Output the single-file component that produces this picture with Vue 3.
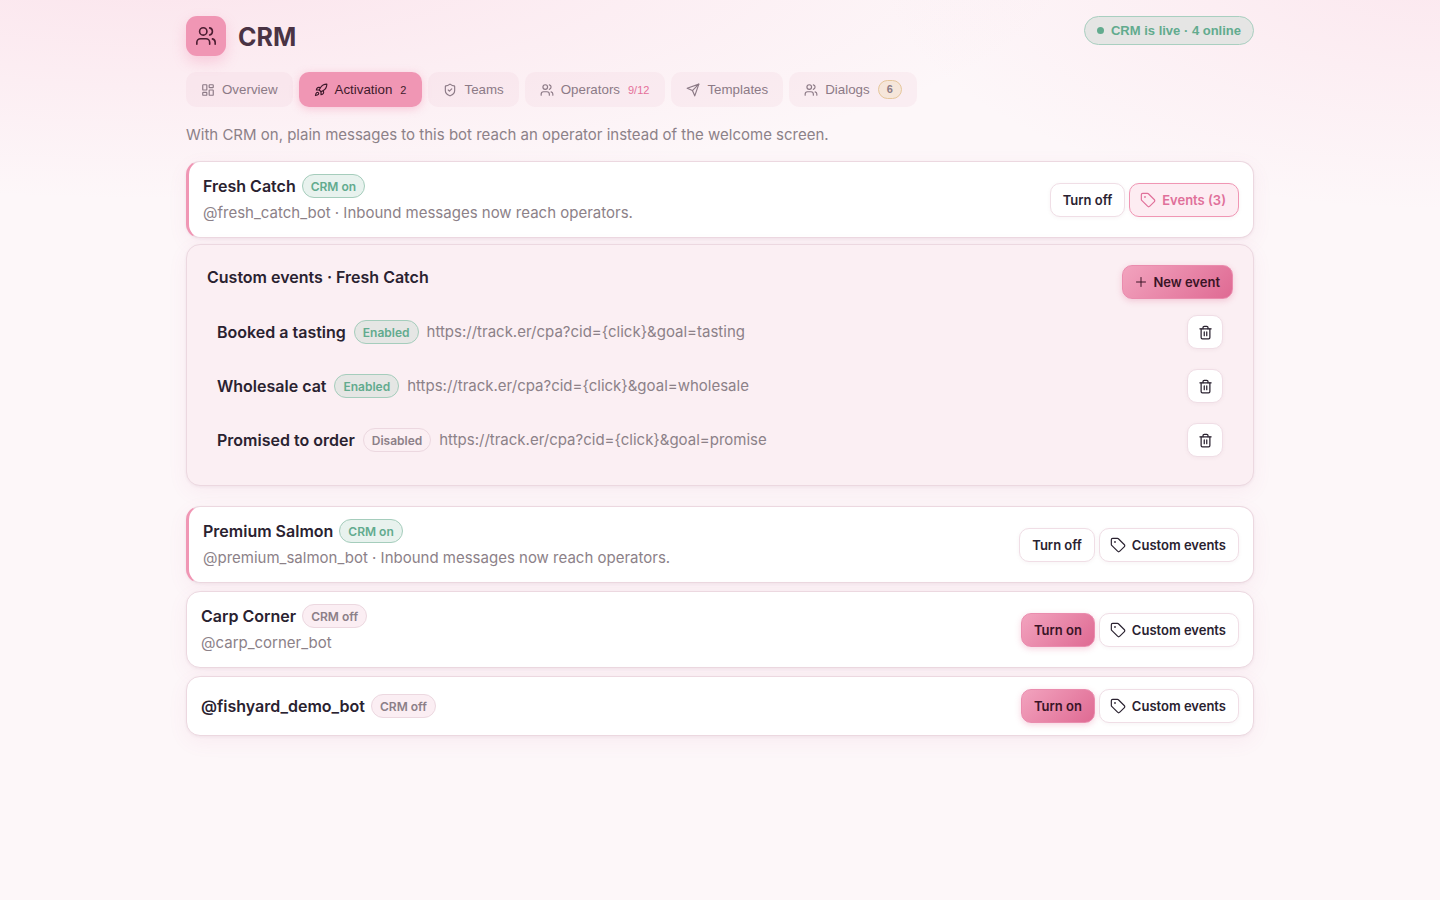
<script setup>
	import { ref } from "vue";

	// Icon shapes, all on a 24x24 grid
	const icons = {
		users: [
			"M16 21v-2a4 4 0 0 0-4-4H6a4 4 0 0 0-4 4v2",
			"M13 7a4 4 0 1 1-8 0 4 4 0 0 1 8 0z",
			"M22 21v-2a4 4 0 0 0-3-3.87",
			"M16 3.13a4 4 0 0 1 0 7.75",
		],
		dashboard: [
			"M4 3h5a1 1 0 0 1 1 1v7a1 1 0 0 1-1 1H4a1 1 0 0 1-1-1V4a1 1 0 0 1 1-1z",
			"M15 3h5a1 1 0 0 1 1 1v3a1 1 0 0 1-1 1h-5a1 1 0 0 1-1-1V4a1 1 0 0 1 1-1z",
			"M15 12h5a1 1 0 0 1 1 1v7a1 1 0 0 1-1 1h-5a1 1 0 0 1-1-1v-7a1 1 0 0 1 1-1z",
			"M4 16h5a1 1 0 0 1 1 1v3a1 1 0 0 1-1 1H4a1 1 0 0 1-1-1v-3a1 1 0 0 1 1-1z",
		],
		rocket: [
			"M4.5 16.5c-1.5 1.26-2 5-2 5s3.74-.5 5-2c.71-.84.7-2.13-.09-2.91a2.18 2.18 0 0 0-2.91-.09z",
			"m12 15-3-3a22 22 0 0 1 2-3.95A12.88 12.88 0 0 1 22 2c0 2.72-.78 7.5-6 11a22.35 22.35 0 0 1-4 2z",
			"M9 12H4s.55-3.03 2-4c1.62-1.08 5 0 5 0",
			"M12 15v5s3.03-.55 4-2c1.08-1.62 0-5 0-5",
		],
		shield: [
			"M20 13c0 5-3.5 7.5-7.66 8.95a1 1 0 0 1-.67-.01C7.5 20.5 4 18 4 13V6a1 1 0 0 1 1-1c2 0 4.5-1.2 6.24-2.72a1.17 1.17 0 0 1 1.52 0C14.51 3.81 17 5 19 5a1 1 0 0 1 1 1z",
			"m9 12 2 2 4-4",
		],
		send: ["m22 2-7 20-4-9-9-4Z", "M22 2 11 13"],
		tag: [
			"M12.586 2.586A2 2 0 0 0 11.172 2H4a2 2 0 0 0-2 2v7.172a2 2 0 0 0 .586 1.414l8.704 8.704a2.426 2.426 0 0 0 3.42 0l6.58-6.58a2.426 2.426 0 0 0 0-3.42z",
			"M8 7.5a.5.5 0 1 1-1 0 .5.5 0 0 1 1 0z",
		],
		trash: [
			"M3 6h18",
			"M19 6v14c0 1-1 2-2 2H7c-1 0-2-1-2-2V6",
			"M8 6V4c0-1 1-2 2-2h4c1 0 2 1 2 2v2",
			"M10 11v6",
			"M14 11v6",
		],
	};

	const activeTab = ref("Activation");

	const tabs = [
		{ label: "Overview", icon: "dashboard" },
		{ label: "Activation", icon: "rocket", count: "2" },
		{ label: "Teams", icon: "shield" },
		{ label: "Operators", icon: "users", count: "9/12" },
		{ label: "Templates", icon: "send" },
		{ label: "Dialogs", icon: "users", unread: "6" },
	];

	const bots = ref([
		{
			name: "Fresh Catch",
			handle: "@fresh_catch_bot",
			on: true,
			open: true,
			events: [
				{ name: "Booked a tasting", goal: "tasting", enabled: true },
				{ name: "Wholesale cat", goal: "wholesale", enabled: true },
				{ name: "Promised to order", goal: "promise", enabled: false },
			],
		},
		{ name: "Premium Salmon", handle: "@premium_salmon_bot", on: true, events: [] },
		{ name: "Carp Corner", handle: "@carp_corner_bot", on: false, events: [] },
		{ name: "@fishyard_demo_bot", on: false, events: [] },
	]);

	const removeEvent = (bot, event) => {
		bot.events = bot.events.filter((e) => e !== event);
	};
</script>

<template>
	<main class="crm">
		<header class="crm-header">
			<div class="crm-title">
				<span class="crm-logo">
					<svg class="icon" viewBox="0 0 24 24">
						<path v-for="d in icons.users" :key="d" :d="d" />
					</svg>
				</span>
				<h1>CRM</h1>
			</div>
			<span class="live-pill"><i class="dot"></i>CRM is live · 4 online</span>
		</header>

		<nav class="tabs">
			<button
				v-for="tab in tabs"
				:key="tab.label"
				type="button"
				class="tab"
				:class="{ active: tab.label === activeTab }"
				@click="activeTab = tab.label"
			>
				<svg class="icon" viewBox="0 0 24 24">
					<path v-for="d in icons[tab.icon]" :key="d" :d="d" />
				</svg>
				<span>{{ tab.label }}</span>
				<span v-if="tab.count" class="tab-count">{{ tab.count }}</span>
				<span v-if="tab.unread" class="tab-unread">{{ tab.unread }}</span>
			</button>
		</nav>

		<p class="intro muted">
			With CRM on, plain messages to this bot reach an operator instead of the
			welcome screen.
		</p>

		<div class="bots">
			<section v-for="bot in bots" :key="bot.name">
				<div class="bot-card" :class="{ on: bot.on }">
					<div class="bot-info">
						<div class="bot-name">
							<strong>{{ bot.name }}</strong>
							<span class="badge" :class="bot.on ? 'success' : 'off'">
								{{ bot.on ? "CRM on" : "CRM off" }}
							</span>
						</div>
						<div v-if="bot.handle" class="muted">
							{{ bot.handle
							}}<template v-if="bot.on">
								· Inbound messages now reach operators.</template
							>
						</div>
					</div>
					<div class="bot-actions">
						<button
							type="button"
							class="btn"
							:class="{ primary: !bot.on }"
							@click="bot.on = !bot.on"
						>
							{{ bot.on ? "Turn off" : "Turn on" }}
						</button>
						<button
							type="button"
							class="btn with-icon"
							:class="{ selected: bot.open }"
							@click="bot.open = !bot.open"
						>
							<svg class="icon tag" viewBox="0 0 24 24">
								<path v-for="d in icons.tag" :key="d" :d="d" />
							</svg>
							{{ bot.open ? `Events (${bot.events.length})` : "Custom events" }}
						</button>
					</div>
				</div>

				<!-- Custom events -->
				<div v-if="bot.open" class="events">
					<div class="events-header">
						<h2>Custom events · {{ bot.name }}</h2>
						<button type="button" class="btn primary">
							<svg class="icon plus" viewBox="0 0 24 24">
								<path d="M3 12h18M12 3v18" />
							</svg>
							New event
						</button>
					</div>
					<ul>
						<li v-for="event in bot.events" :key="event.name">
							<strong>{{ event.name }}</strong>
							<span class="badge" :class="{ success: event.enabled }">
								{{ event.enabled ? "Enabled" : "Disabled" }}
							</span>
							<span class="muted event-url"
								>https://track.er/cpa?cid={click}&amp;goal={{ event.goal }}</span
							>
							<button
								type="button"
								class="btn delete"
								aria-label="Delete event"
								@click="removeEvent(bot, event)"
							>
								<svg class="icon" viewBox="0 0 24 24">
									<path v-for="d in icons.trash" :key="d" :d="d" />
								</svg>
							</button>
						</li>
					</ul>
				</div>
			</section>
		</div>
	</main>
</template>

<style>
	body {
		margin: 0;
		min-height: 100vh;
		background: radial-gradient(
				ellipse 900px 240px at 12% -40px,
				rgba(244, 160, 190, 0.22),
				transparent
			),
			radial-gradient(
				ellipse 560px 240px at 100% -30px,
				rgba(244, 160, 190, 0.18),
				transparent
			),
			#fdf7f9;
	}
</style>

<style scoped>
	.crm {
		box-sizing: border-box;
		max-width: 1100px;
		margin: 0 auto;
		padding: 16px;
		font-family: Inter, "Liberation Sans", sans-serif;
		font-size: 16px;
		line-height: 24px;
		color: #2a2230;
	}

	.icon {
		width: 14px;
		height: 14px;
		flex-shrink: 0;
		fill: none;
		stroke: currentColor;
		stroke-width: 2;
		stroke-linecap: round;
		stroke-linejoin: round;
	}

	button {
		cursor: pointer;
	}

	/* Header */

	.crm-header {
		display: flex;
		justify-content: space-between;
		align-items: flex-start;
		margin-bottom: 16px;
	}

	.crm-title {
		display: flex;
		align-items: center;
		gap: 12px;
	}

	.crm-logo {
		display: flex;
		align-items: center;
		justify-content: center;
		width: 40px;
		height: 40px;
		border-radius: 11px;
		background: #f096b4;
		color: #4a1c30;
		box-shadow: 0 6px 14px rgba(240, 120, 160, 0.28);
	}

	.crm-logo .icon {
		width: 22px;
		height: 22px;
		stroke-width: 1.75;
	}

	h1 {
		margin: 0;
		padding-top: 2px;
		font-size: 25px;
		line-height: 32px;
		font-weight: 700;
		color: #4a3344;
	}

	.live-pill {
		display: flex;
		align-items: center;
		gap: 7px;
		padding: 6px 12px;
		border: 1px solid #a9cfc0;
		border-radius: 999px;
		background: #e5e5e4;
		font-family: "Liberation Sans", Arial, sans-serif;
		font-size: 13px;
		line-height: 15px;
		font-weight: 700;
		color: #62ab8e;
	}

	.dot {
		width: 7px;
		height: 7px;
		border-radius: 50%;
		background: currentColor;
	}

	/* Tabs */

	.tabs {
		display: flex;
		flex-wrap: wrap;
		gap: 6px;
		margin-bottom: 16px;
	}

	.tab {
		display: flex;
		align-items: center;
		gap: 7px;
		height: 35px;
		padding: 0 15px;
		border: 0;
		border-radius: 10px;
		background: rgba(240, 205, 218, 0.22);
		font-family: "Liberation Sans", Arial, sans-serif;
		color: #8c7a86;
	}

	.tab.active {
		background: #f096b4;
		color: #3f1a2c;
		box-shadow: 0 2px 8px rgba(240, 120, 160, 0.35);
	}

	.tab-count {
		padding: 0 1px;
		font-size: 11px;
		color: #e5709a;
	}

	.active .tab-count {
		color: inherit;
	}

	.tab-unread {
		margin-left: 1px;
		padding: 0 8px;
		border: 1px solid #e6c79c;
		border-radius: 999px;
		background: #f6e6da;
		font-size: 11px;
		line-height: 17px;
		font-weight: 700;
	}

	.muted {
		font-size: 15px;
		color: #8c8188;
	}

	.intro {
		margin: 0 0 14px;
	}

	/* Bots */

	.bots {
		display: flex;
		flex-direction: column;
		gap: 8px;
	}

	.bot-card {
		display: flex;
		align-items: center;
		justify-content: space-between;
		gap: 12px;
		padding: 12px 14px;
		border: 1px solid #ecd8e0;
		border-radius: 14px;
		background: #fff;
		box-shadow: 0 1px 3px rgba(90, 30, 60, 0.06),
			0 6px 20px rgba(200, 90, 140, 0.07);
	}

	.bot-card.on {
		border-left: 3px solid #f096b4;
	}

	.bot-info {
		display: flex;
		flex-direction: column;
		gap: 3px;
	}

	.bot-name {
		display: flex;
		align-items: center;
		gap: 6px;
	}

	strong,
	h2 {
		font-weight: 600;
	}

	.badge {
		padding: 1px 8px 0;
		border: 1px solid #ecd8e0;
		border-radius: 999px;
		font-size: 12px;
		line-height: 21px;
		font-weight: 600;
		color: #8c7f88;
	}

	.badge.off {
		background: #fbeef3;
	}

	.badge.success {
		border-color: #a5cdbc;
		background: #e8f2ee;
		color: #62ab8e;
	}

	.bot-actions {
		display: flex;
		gap: 4px;
	}

	.btn {
		display: flex;
		align-items: center;
		justify-content: center;
		gap: 6px;
		box-sizing: border-box;
		height: 34px;
		padding: 0 12px;
		border: 1px solid #f0dee6;
		border-radius: 10px;
		background: #fff;
		font-family: inherit;
		font-size: 13px;
		font-weight: 600;
		color: #2a2230;
		box-shadow: 0 1px 4px rgba(90, 30, 60, 0.05);
	}

	.btn.with-icon {
		padding-left: 10px;
	}

	.btn.selected {
		border-color: #f096b4;
		background: #fdecf2;
		color: #e0709a;
	}

	.btn.primary {
		border-color: #ea8cae;
		background: linear-gradient(135deg, #f2a3be, #df6a93);
		color: #3a1426;
		box-shadow: 0 2px 6px rgba(224, 106, 147, 0.3);
	}

	.btn .tag {
		width: 16px;
		height: 16px;
		stroke-width: 1.75;
	}

	.btn .plus {
		width: 12px;
		height: 12px;
	}

	/* Custom events panel */

	.events {
		margin: 6px 0 12px;
		padding: 20px;
		border: 1px solid #ecd8e0;
		border-radius: 14px;
		background: #fbeff3;
		box-shadow: 0 1px 3px rgba(90, 30, 60, 0.06),
			0 6px 20px rgba(200, 90, 140, 0.07);
	}

	.events-header {
		display: flex;
		align-items: flex-start;
		justify-content: space-between;
		margin-bottom: 8px;
	}

	h2 {
		margin: 0;
		font-size: 16px;
		line-height: 24px;
	}

	ul {
		display: flex;
		flex-direction: column;
		gap: 4px;
		margin: 0;
		padding: 0;
		list-style: none;
	}

	li {
		display: flex;
		align-items: center;
		gap: 8px;
		padding: 8px 10px;
	}

	.events .badge.success {
		background: #e5e6e4;
	}

	.event-url {
		flex: 1;
	}

	.btn.delete {
		width: 36px;
		padding: 0;
	}

	.delete .icon {
		width: 15px;
		height: 15px;
	}
</style>
